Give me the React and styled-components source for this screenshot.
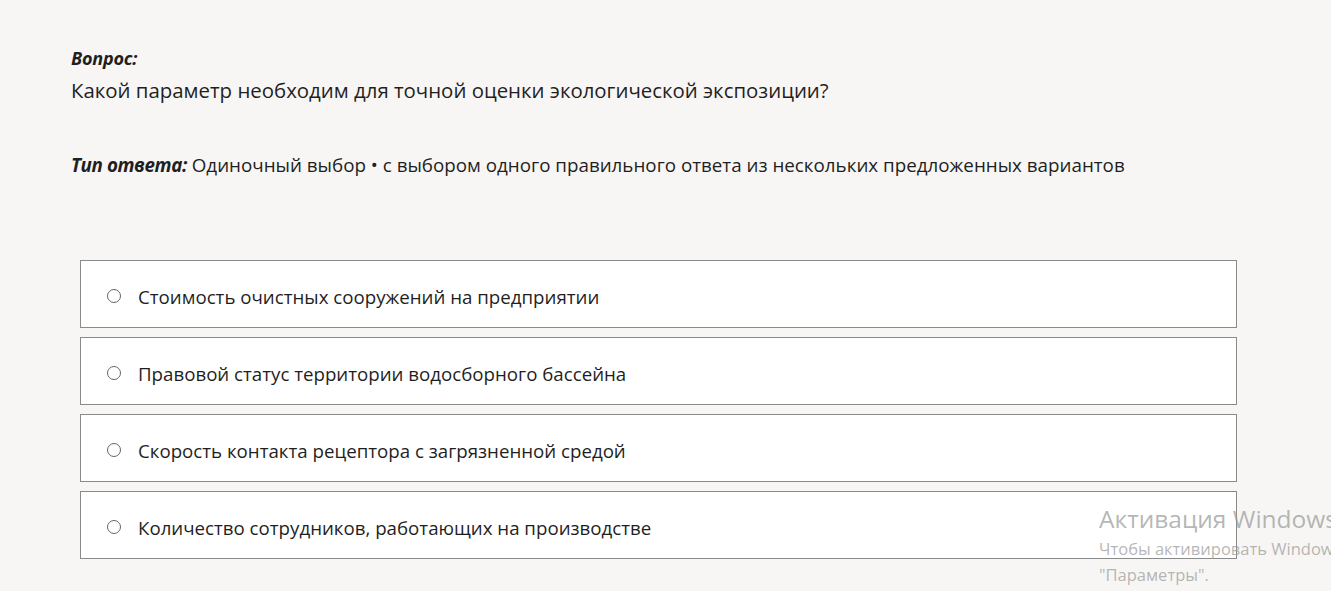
import React from "react";
import styled, { createGlobalStyle } from "styled-components";

const Global = createGlobalStyle`
  html, body { margin: 0; padding: 0; background: #f7f6f4; }
  body { font-family: "Open Sans", "Noto Sans", sans-serif; color: #1f1f1f; }
`;

const Page = styled.div`
  position: relative;
  width: 1331px;
  height: 591px;
  overflow: hidden;
  box-sizing: border-box;
  padding: 46px 0 0 71px;
`;

const Label = styled.div`
  font-weight: 700;
  font-style: italic;
  font-size: 18px;
  line-height: 24px;
  letter-spacing: -0.2px;
`;

const Question = styled.div`
  font-size: 20.4px;
  line-height: 30px;
  margin-top: 5px;
`;

const TypeLine = styled.div`
  margin-top: 45px;
  font-size: 18.8px;
  line-height: 30px;
`;

const TypeLabel = styled.span`
  font-weight: 700;
  font-style: italic;
  letter-spacing: -0.4px;
`;

const Options = styled.div`
  margin: 80px 0 0 9px;
  width: 1157px;
  display: flex;
  flex-direction: column;
  gap: 9px;
`;

const Option = styled.label`
  position: relative;
  z-index: 1;
  display: flex;
  align-items: center;
  height: 68px;
  box-sizing: border-box;
  border: 1px solid #8a8a8a;
  background: #fff;
  padding: 4px 0 0 26px;
  font-size: 18.7px;
`;

const Radio = styled.span`
  width: 12px;
  height: 12px;
  border: 1px solid #666;
  border-radius: 50%;
  margin-right: 17px;
  flex: none;
`;

const Watermark = styled.div`
  position: absolute;
  z-index: 2;
  left: 1099px;
  top: 502px;
  color: rgba(150, 150, 150, 0.7);
  white-space: nowrap;
`;

const WmTitle = styled.div`
  font-size: 24.5px;
  line-height: 34px;
`;

const WmText = styled.div`
  font-size: 16.5px;
  line-height: 26px;
`;

const options = [
  "Стоимость очистных сооружений на предприятии",
  "Правовой статус территории водосборного бассейна",
  "Скорость контакта рецептора с загрязненной средой",
  "Количество сотрудников, работающих на производстве",
];

export default function App() {
  return (
    <Page>
      <Global />
      <Label>Вопрос:</Label>
      <Question>Какой параметр необходим для точной оценки экологической экспозиции?</Question>
      <TypeLine>
        <TypeLabel>Тип ответа:</TypeLabel> Одиночный выбор • с выбором одного правильного ответа из нескольких предложенных вариантов
      </TypeLine>
      <Options>
        {options.map((o) => (
          <Option key={o}>
            <Radio />
            {o}
          </Option>
        ))}
      </Options>
      <Watermark>
        <WmTitle>Активация Windows</WmTitle>
        <WmText>Чтобы активировать Windows, перейдите в раздел</WmText>
        <WmText>"Параметры".</WmText>
      </Watermark>
    </Page>
  );
}
